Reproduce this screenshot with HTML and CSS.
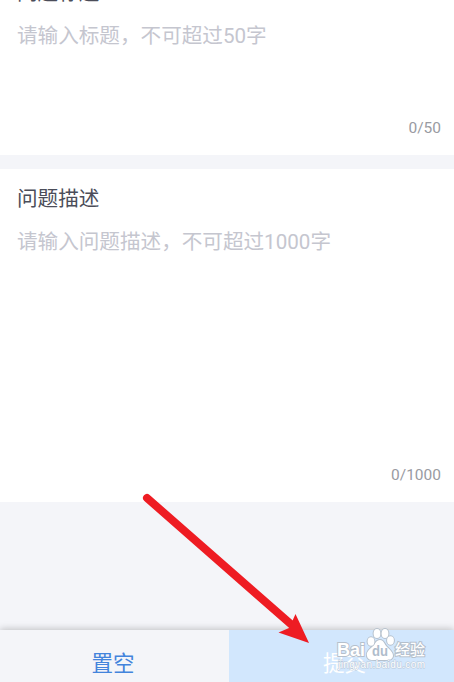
FILE: index.html
```html
<!DOCTYPE html>
<html lang="zh-CN">
<head>
<meta charset="utf-8">
<title>问题描述</title>
<link rel="stylesheet" href="styles.css">
</head>
<body>
<main class="screen">
  <section class="field field-title">
    <h2 class="label">问题标题</h2>
    <p class="placeholder">请输入标题，不可超过50字</p>
    <span class="count">0/50</span>
  </section>
  <section class="field field-desc">
    <h2 class="label">问题描述</h2>
    <p class="placeholder">请输入问题描述，不可超过1000字</p>
    <span class="count">0/1000</span>
  </section>
  <footer class="actions">
    <div class="button reset">置空</div>
    <div class="button submit">提交</div>
  </footer>
  <svg class="arrow" viewBox="0 0 170 152" width="170" height="152">
    <path d="M7 8 153 136" stroke="#ee1c23" stroke-width="8" stroke-linecap="round"/>
    <path d="M169 153 155.500 124 151 134 149 138 138.500 142.500Z" fill="#ee1c23"/>
  </svg>
  <svg class="watermark" viewBox="0 0 100 48" width="100" height="48">
    <g class="mark">
      <text class="brand" x="2" y="29.500" textLength="28" lengthAdjust="spacingAndGlyphs">Bai</text>
      <path d="M45 14c-4 0-5 4-8 7-3 3-6 5-5 9 1 5 6 4 13 4s12 1 13-4c0-4-3-6-6-9-3-3-3-7-7-7Z"/>
      <ellipse cx="36" cy="15.500" rx="3.400" ry="4.200"/>
      <ellipse cx="42" cy="7.500" rx="3.400" ry="4.500"/>
      <ellipse cx="50" cy="7.500" rx="3.400" ry="4.500"/>
      <ellipse cx="55.500" cy="14.500" rx="3.400" ry="4.200"/>
      <text class="jingyan" x="60" y="29" textLength="30">经验</text>
    </g>
    <text class="du" x="37" y="29.500" textLength="16" lengthAdjust="spacingAndGlyphs">du</text>
    <text class="domain" x="3" y="42" textLength="87">jingyan.baidu.com</text>
  </svg>
</main>
</body>
</html>
```
FILE: styles.css
```css
* {
  box-sizing: border-box;
}

body {
  margin: 0;
  background: #f4f5f9;
  font-family: Roboto, "Noto Sans CJK SC", sans-serif;
}

.screen {
  position: relative;
  display: flex;
  flex-direction: column;
  height: 682px;
  overflow: hidden;
}

.field {
  display: flex;
  flex-direction: column;
  flex: none;
  padding: 15px 13px 0 17px;
  background: #fff;
}

.field-title {
  height: 192px;
  margin-top: -37px;
  margin-bottom: 14px;
}

.field-desc {
  height: 333px;
}

.label,
.placeholder {
  margin: 0;
  font-size: 20.6px;
  font-weight: 400;
  line-height: 30px;
  white-space: nowrap;
}

.label {
  color: #4b4d59;
}

.placeholder {
  margin-top: 13px;
  color: #c5c6cf;
}

.field-title .label {
  padding-top: 1px;
  line-height: 29px;
}

.count {
  align-self: flex-end;
  margin-top: auto;
  margin-bottom: 17px;
  color: #999ba2;
  font-size: 15.5px;
  line-height: 20px;
}

.actions {
  display: flex;
  height: 52px;
  margin-top: auto;
  box-shadow: 0 -1px 7px rgba(0, 0, 0, 0.22);
}

.button {
  display: flex;
  flex: 1;
  justify-content: center;
  padding-top: 18px;
  font-size: 21.5px;
  line-height: 32px;
}

.reset {
  flex: 0 0 229px;
  padding-right: 3px;
  background: #f4f5f9;
  color: #4384dc;
}

.submit {
  background: #d2e7fd;
  color: #fff;
  padding-left: 6px;
}

.arrow {
  position: absolute;
  left: 140px;
  top: 490px;
  overflow: visible;
  fill: none;
}

.watermark {
  position: absolute;
  left: 335px;
  top: 626px;
  font-family: "Liberation Sans", "Noto Sans CJK SC", sans-serif;
}

.mark {
  fill: #fff;
  stroke: #b5c0cc;
  stroke-width: 2px;
  paint-order: stroke;
}

.brand {
  font-size: 19px;
  font-weight: 700;
}

.jingyan {
  font-size: 15px;
  font-weight: 500;
}

.du {
  fill: #afbdcc;
  font-size: 15px;
  font-weight: 700;
}

.domain {
  fill: #fff;
  stroke: #b9c8d8;
  stroke-width: 1px;
  paint-order: stroke;
  font-size: 10px;
}
```
